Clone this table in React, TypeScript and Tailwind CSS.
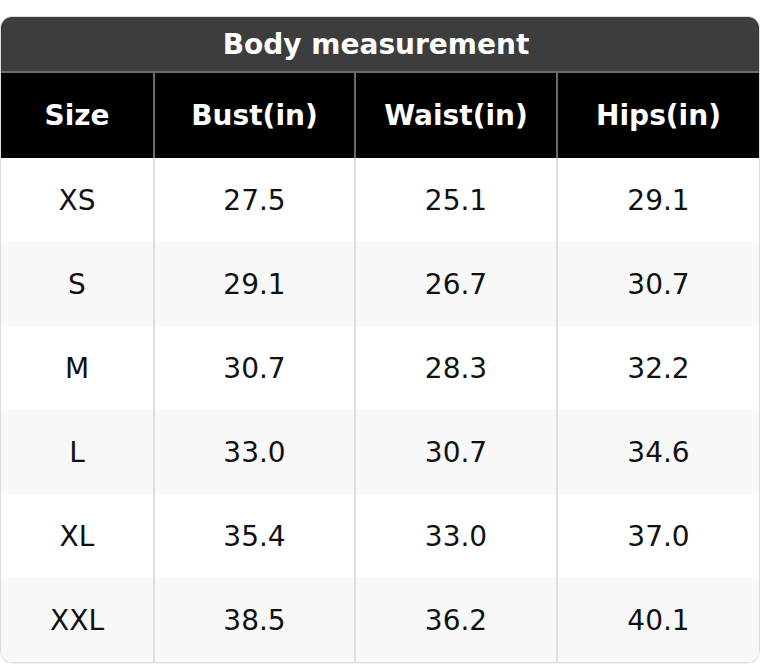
import React from 'react';

const columns = ['Size', 'Bust(in)', 'Waist(in)', 'Hips(in)'];

const rows: string[][] = [
  ['XS', '27.5', '25.1', '29.1'],
  ['S', '29.1', '26.7', '30.7'],
  ['M', '30.7', '28.3', '32.2'],
  ['L', '33.0', '30.7', '34.6'],
  ['XL', '35.4', '33.0', '37.0'],
  ['XXL', '38.5', '36.2', '40.1'],
];

const gridCols = 'grid grid-cols-[152px_201px_202px_203px]';

export default function App() {
  return (
    <div className="w-[760px] h-[664px] bg-white pt-[16px] font-['DejaVu_Sans',sans-serif]">
      <div className="w-[760px] rounded-[12px] overflow-hidden border border-[#dcdcdc] shadow-[0_1px_2px_rgba(0,0,0,0.08)]">
        <div className="h-[56px] bg-[#3d3d3d] border-b-2 border-[#6a6a6a] flex items-center justify-center pr-[8px] pt-px text-white text-[28px] font-bold">
          Body measurement
        </div>
        <div className={`${gridCols} bg-black h-[85px]`}>
          {columns.map((c, i) => (
            <div
              key={c}
              className={`flex items-center justify-center text-white text-[28px] font-bold ${i > 0 ? 'border-l-2 border-[#6a6a6a]' : ''}`}
            >
              {c}
            </div>
          ))}
        </div>
        {rows.map((r, ri) => (
          <div key={r[0]} className={`${gridCols} h-[84px] ${ri % 2 === 1 ? 'bg-[#f8f8f8]' : 'bg-white'}`}>
            {r.map((v, i) => (
              <div
                key={i}
                className={`flex items-center justify-center pt-px text-[#111] text-[28px] ${i > 0 ? 'border-l-2 border-[#dedede]' : ''}`}
              >
                {v}
              </div>
            ))}
          </div>
        ))}
      </div>
    </div>
  );
}
